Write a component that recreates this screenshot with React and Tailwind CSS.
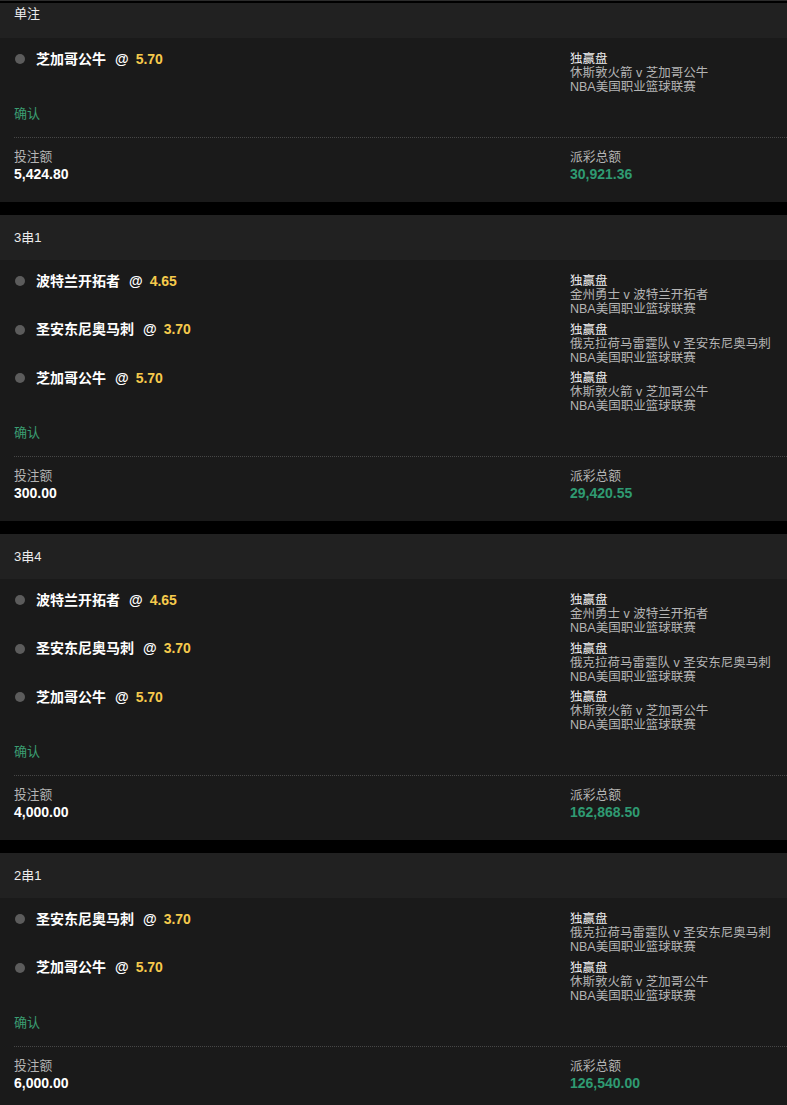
import React from "react";

const bets = [
  {
    type: "单注",
    legs: [{ name: "芝加哥公牛", odds: "5.70", match: "休斯敦火箭 v 芝加哥公牛" }],
    stake: "5,424.80",
    payout: "30,921.36",
  },
  {
    type: "3串1",
    legs: [
      { name: "波特兰开拓者", odds: "4.65", match: "金州勇士 v 波特兰开拓者" },
      { name: "圣安东尼奥马刺", odds: "3.70", match: "俄克拉荷马雷霆队 v 圣安东尼奥马刺" },
      { name: "芝加哥公牛", odds: "5.70", match: "休斯敦火箭 v 芝加哥公牛" },
    ],
    stake: "300.00",
    payout: "29,420.55",
  },
  {
    type: "3串4",
    legs: [
      { name: "波特兰开拓者", odds: "4.65", match: "金州勇士 v 波特兰开拓者" },
      { name: "圣安东尼奥马刺", odds: "3.70", match: "俄克拉荷马雷霆队 v 圣安东尼奥马刺" },
      { name: "芝加哥公牛", odds: "5.70", match: "休斯敦火箭 v 芝加哥公牛" },
    ],
    stake: "4,000.00",
    payout: "162,868.50",
  },
  {
    type: "2串1",
    legs: [
      { name: "圣安东尼奥马刺", odds: "3.70", match: "俄克拉荷马雷霆队 v 圣安东尼奥马刺" },
      { name: "芝加哥公牛", odds: "5.70", match: "休斯敦火箭 v 芝加哥公牛" },
    ],
    stake: "6,000.00",
    payout: "126,540.00",
  },
];

const BetCard = ({ bet, first }) => {
  return (
    <div className="bg-[#1a1a1a]">
      {first ? (
        <div className="h-[35px] bg-[#212121] pl-[14px] pt-[4px] text-[13px] leading-[14px] text-[#ececec]">
          {bet.type}
        </div>
      ) : (
        <div className="h-[45px] bg-[#212121] pl-[14px] flex items-center text-[13px] leading-[14px] text-[#ececec]">
          {bet.type}
        </div>
      )}
      <div className="pl-[14px] pt-[14px] pb-[20px]">
        <div className="flex flex-col gap-[6.5px]">
          {bet.legs.map((leg) => (
            <div key={leg.name + leg.match} className="flex h-[42px]">
              <div className="w-[556px] flex items-start">
                <div className="flex items-center h-[14px]">
                  <span className="ml-[1px] w-[10px] h-[10px] rounded-full bg-[#5c5c5c]"></span>
                  <span className="ml-[11px] text-[14px] font-bold text-white">{leg.name}</span>
                  <span className="ml-[9px] text-[14px] font-bold text-white">@</span>
                  <span className="ml-[7px] text-[14px] font-bold text-[#f6ca4c]">{leg.odds}</span>
                </div>
              </div>
              <div className="flex flex-col text-[12.5px] leading-[14px]">
                <span className="text-[#ededed]">独赢盘</span>
                <span className="text-[#b4b4b4] whitespace-nowrap">{leg.match}</span>
                <span className="text-[#b4b4b4]">NBA美国职业篮球联赛</span>
              </div>
            </div>
          ))}
        </div>
        <div className="mt-[13px] text-[13px] leading-[14px] text-[#3a9e72]">确认</div>
        <div className="mt-[16px] border-t border-dotted border-[#474747]"></div>
        <div className="mt-[12px] flex">
          <div className="w-[556px]">
            <div className="text-[12.75px] leading-[14px] text-[#b4b4b4]">投注额</div>
            <div className="mt-[2px] text-[14px] leading-[16px] font-bold text-white">{bet.stake}</div>
          </div>
          <div>
            <div className="text-[12.75px] leading-[14px] text-[#b4b4b4]">派彩总额</div>
            <div className="mt-[2px] text-[14px] leading-[16px] font-bold text-[#2f9a72]">{bet.payout}</div>
          </div>
        </div>
      </div>
    </div>
  );
};

export default function App() {
  return (
    <div
      className="min-h-[1105px] w-[787px] bg-black overflow-hidden"
      style={{ fontFamily: '"Liberation Sans", Arial, "Noto Sans CJK SC", sans-serif' }}
    >
      <div className="h-[1px] bg-[#2c2c2c]"></div>
      <div className="h-[2px] bg-black"></div>
      <div className="flex flex-col gap-[13px]">
        {bets.map((bet, i) => (
          <BetCard key={bet.type} bet={bet} first={i === 0} />
        ))}
      </div>
    </div>
  );
}
